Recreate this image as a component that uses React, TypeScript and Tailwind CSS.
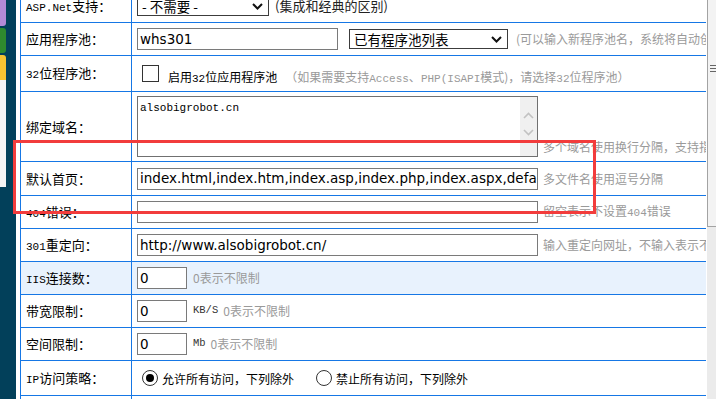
import React from "react";

const cjk = "font-['Noto_Sans_CJK_SC',sans-serif]";

const Latin = ({ children }: { children: React.ReactNode }) => (
  <span className="font-['Liberation_Mono',monospace] text-[11px]">{children}</span>
);

interface RowProps {
  h: string;
  label: React.ReactNode;
  bg?: string;
  children?: React.ReactNode;
}

const Row = ({ h, label, bg = "bg-white", children }: RowProps) => (
  <div className={`flex shrink-0 border-b border-[#1677e5] ${h} ${bg}`}>
    <div className="flex w-[111px] shrink-0 items-center border-r border-[#1677e5] pl-[5px] text-[13px] text-black">
      <span>{label}</span>
    </div>
    <div className="flex min-w-0 flex-1 items-center whitespace-nowrap pl-[5px]">
      {children}
    </div>
  </div>
);

const TextBox = ({ value, w }: { value: string; w: string }) => (
  <div
    className={`flex h-[22px] shrink-0 items-center overflow-hidden border border-[#7a7a7a] bg-white pl-[2px] font-['DejaVu_Sans',sans-serif] text-[13.5px] text-black ${w}`}
  >
    {value}
  </div>
);

const Chevron = () => (
  <svg width="11" height="7" viewBox="0 0 11 7" className="shrink-0">
    <polyline points="1,1 5.5,5.5 10,1" fill="none" stroke="#111" strokeWidth="2" />
  </svg>
);

const Select = ({ value, w }: { value: string; w: string }) => (
  <div
    className={`flex h-[20px] shrink-0 items-center justify-between border border-[#3c3c3c] bg-white pl-[4px] pr-[5px] text-[13.5px] text-black ${w}`}
  >
    <span>{value}</span>
    <Chevron />
  </div>
);

const Hint = ({ children, className = "" }: { children: React.ReactNode; className?: string }) => (
  <span className={`text-[12px] text-[#9a9a9a] ${className}`}>{children}</span>
);

const Radio = ({ checked }: { checked?: boolean }) => (
  <span className="flex h-[16px] w-[16px] shrink-0 items-center justify-center rounded-full border border-[#333] bg-white">
    {checked && <span className="h-[8px] w-[8px] rounded-full bg-black" />}
  </span>
);

const Sidebar = () => (
  <div className="flex w-4 shrink-0 flex-col bg-[#02405a]">
    <div className="h-[26px] w-[6px] rounded-br-[3px] bg-[#b48ad6]" />
    <div className="mt-[2px] h-[25px] w-[6px] rounded-r-[3px] bg-[#2e8a2e]" />
    <div className="mt-[2px] h-[25px] w-[6px] rounded-tr-[3px] bg-[#f6c432]" />
    <div className="h-[107px] w-[6px] bg-[#f4f4f4]" />
  </div>
);

const Scrollbar = () => (
  <div className="flex w-[10px] shrink-0 flex-col bg-white pl-px">
    <div className="flex h-[227px] flex-col items-center justify-start border-b border-l border-[#a3a3a3] bg-[#f3f3f3] pt-[65px]">
      <div className="flex flex-col gap-[2px] pl-[2px]">
        <div className="h-px w-[6px] bg-[#666]" />
        <div className="h-px w-[6px] bg-[#666]" />
        <div className="h-px w-[6px] bg-[#666]" />
      </div>
    </div>
    <div className="flex-1 bg-[#ebebeb]" />
  </div>
);

const App = () => {
  return (
    <div className={`relative flex h-[399px] w-[716px] overflow-hidden bg-white ${cjk}`}>
      <Sidebar />
      <div className="ml-1 flex w-[686px] shrink-0 flex-col overflow-hidden">
        <div className="-mt-[10px] flex flex-col border-l border-[#1677e5]">
          <Row h="h-[33px]" label={<><Latin>ASP.Net</Latin>支持：</>}>
            <Select value="- 不需要 -" w="w-[132px]" />
            <span className="ml-[6px] text-[13px] text-[#222]">(集成和经典的区别)</span>
          </Row>
          <Row h="h-[33px]" label="应用程序池：">
            <TextBox value="whs301" w="w-[201px]" />
            <Select value="已有程序池列表" w="ml-[11px] w-[159px]" />
            <Hint className="ml-[8px]">(可以输入新程序池名，系统将自动创建)</Hint>
          </Row>
          <Row h="h-[36px]" label={<><Latin>32</Latin>位程序池：</>}>
            <span className="ml-[5px] h-[17px] w-[17px] shrink-0 border border-[#333] bg-white" />
            <span className="ml-[9px] mt-[9px] text-[12px] text-black">
              启用<Latin>32</Latin>位应用程序池
            </span>
            <Hint className="ml-[8px] mt-[9px]">
              （如果需要支持<Latin>Access</Latin>、<Latin>PHP(ISAPI</Latin>模式)，请选择<Latin>32</Latin>位程序池）
            </Hint>
          </Row>
          <Row h="h-[70px]" label="绑定域名：">
            <div className="flex h-[61px] w-[401px] shrink-0 border border-[#707070] bg-white">
              <div className="flex-1 pl-[2px] pt-[3px] font-['Liberation_Mono',monospace] text-[11px] text-black">
                alsobigrobot.cn
              </div>
              <div className="flex w-[17px] flex-col items-center gap-[10px] bg-[#f0f0f0] pt-[15px]">
                <svg width="11" height="7" viewBox="0 0 11 7">
                  <polyline points="1,6 5.5,1.5 10,6" fill="none" stroke="#c2c2c2" strokeWidth="1.6" />
                </svg>
                <svg width="11" height="7" viewBox="0 0 11 7">
                  <polyline points="1,1 5.5,5.5 10,1" fill="none" stroke="#c2c2c2" strokeWidth="1.6" />
                </svg>
              </div>
            </div>
            <Hint className="ml-[5px] mt-[40px]">多个域名使用换行分隔，支持指定端口</Hint>
          </Row>
          <Row h="h-[34px]" label="默认首页：">
            <TextBox value="index.html,index.htm,index.asp,index.php,index.aspx,default.asp" w="w-[401px]" />
            <Hint className="ml-[5px]">多文件名使用逗号分隔</Hint>
          </Row>
          <Row h="h-[33px]" label={<><Latin>404</Latin>错误：</>}>
            <TextBox value="" w="w-[401px]" />
            <Hint className="ml-[5px]">留空表示不设置<Latin>404</Latin>错误</Hint>
          </Row>
          <Row h="h-[33px]" label={<><Latin>301</Latin>重定向：</>}>
            <TextBox value="http://www.alsobigrobot.cn/" w="w-[401px]" />
            <Hint className="ml-[5px]">输入重定向网址，不输入表示不启用</Hint>
          </Row>
          <Row h="h-[33px]" bg="bg-[#e8f2fd]" label={<><Latin>IIS</Latin>连接数：</>}>
            <TextBox value="0" w="w-[50px]" />
            <Hint className="ml-[6px]">0表示不限制</Hint>
          </Row>
          <Row h="h-[33px]" label="带宽限制：">
            <TextBox value="0" w="w-[50px]" />
            <span className="ml-[6px] font-['Liberation_Mono',monospace] text-[10.5px] text-[#333]">KB/S</span>
            <Hint className="ml-[5px]">0表示不限制</Hint>
          </Row>
          <Row h="h-[33px]" label="空间限制：">
            <TextBox value="0" w="w-[50px]" />
            <span className="ml-[6px] font-['Liberation_Mono',monospace] text-[10.5px] text-[#333]">Mb</span>
            <Hint className="ml-[5px]">0表示不限制</Hint>
          </Row>
          <Row h="h-[35px]" label={<><Latin>IP</Latin>访问策略：</>}>
            <div className="ml-[5px] flex items-end gap-[4px]">
              <Radio checked />
              <span className="text-[12px] leading-[14px] text-black">允许所有访问，下列除外</span>
            </div>
            <div className="ml-[22px] flex items-end gap-[4px]">
              <Radio />
              <span className="text-[12px] leading-[14px] text-black">禁止所有访问，下列除外</span>
            </div>
          </Row>
          <Row h="h-[33px]" label="" />
        </div>
      </div>
      <Scrollbar />
      <div className="pointer-events-none absolute left-[13px] top-[140px] h-[74px] w-[583px] border-[3px] border-[#f23c3c]" />
    </div>
  );
};

export default App;
